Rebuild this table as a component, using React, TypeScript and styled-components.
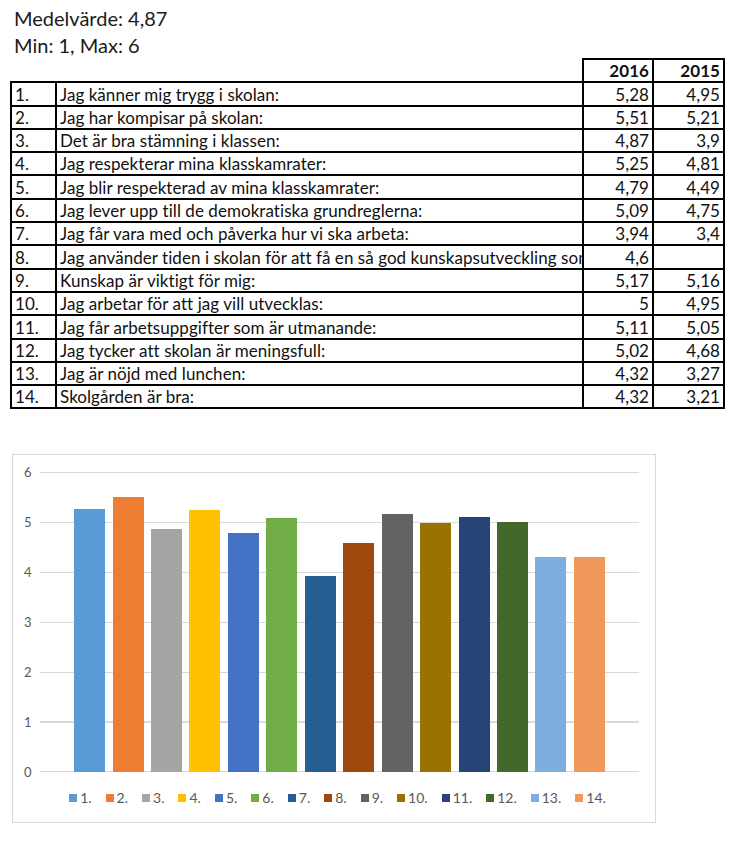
import React from "react";
import styled, { createGlobalStyle } from "styled-components";

const GlobalStyle = createGlobalStyle`
  html, body { margin: 0; padding: 0; background: #fff; }
  body { font-family: Lato, "Liberation Sans", sans-serif; color: #111; }
`;

const rows: { label: string; v16: string; v15: string }[] = [
  { label: "Jag känner mig trygg i skolan:", v16: "5,28", v15: "4,95" },
  { label: "Jag har kompisar på skolan:", v16: "5,51", v15: "5,21" },
  { label: "Det är bra stämning i klassen:", v16: "4,87", v15: "3,9" },
  { label: "Jag respekterar mina klasskamrater:", v16: "5,25", v15: "4,81" },
  { label: "Jag blir respekterad av mina klasskamrater:", v16: "4,79", v15: "4,49" },
  { label: "Jag lever upp till de demokratiska grundreglerna:", v16: "5,09", v15: "4,75" },
  { label: "Jag får vara med och påverka hur vi ska arbeta:", v16: "3,94", v15: "3,4" },
  { label: "Jag använder tiden i skolan för att få en så god kunskapsutveckling som möjligt:", v16: "4,6", v15: "" },
  { label: "Kunskap är viktigt för mig:", v16: "5,17", v15: "5,16" },
  { label: "Jag arbetar för att jag vill utvecklas:", v16: "5", v15: "4,95" },
  { label: "Jag får arbetsuppgifter som är utmanande:", v16: "5,11", v15: "5,05" },
  { label: "Jag tycker att skolan är meningsfull:", v16: "5,02", v15: "4,68" },
  { label: "Jag är nöjd med lunchen:", v16: "4,32", v15: "3,27" },
  { label: "Skolgården är bra:", v16: "4,32", v15: "3,21" },
];

const series: { value: number; color: string }[] = [
  { value: 5.28, color: "#5B9BD5" },
  { value: 5.51, color: "#ED7D31" },
  { value: 4.87, color: "#A5A5A5" },
  { value: 5.25, color: "#FFC000" },
  { value: 4.79, color: "#4472C4" },
  { value: 5.09, color: "#70AD47" },
  { value: 3.94, color: "#255E91" },
  { value: 4.6, color: "#9E480E" },
  { value: 5.17, color: "#636363" },
  { value: 5.0, color: "#997300" },
  { value: 5.11, color: "#264478" },
  { value: 5.02, color: "#43682B" },
  { value: 4.32, color: "#7CAFDD" },
  { value: 4.32, color: "#F1975A" },
];

const UNIT = 49.9;

const Page = styled.div`
  width: 738px;
  height: 847px;
  overflow: hidden;
`;

const Summary = styled.div`
  padding: 5px 0 0 14px;
  height: 58px;
  box-sizing: border-box;
  font-size: 20px;
  line-height: 27px;
  color: #1a1a1a;
`;

const Table = styled.table`
  margin-left: 10px;
  width: 713px;
  border-collapse: collapse;
  table-layout: fixed;
  font-size: 17px;
  letter-spacing: 0.05px;
`;

const Col = styled.col<{ $w: number }>`
  width: ${(p) => p.$w}px;
`;

const Cell = styled.td<{ $num?: boolean; $blank?: boolean }>`
  height: 21.3px;
  padding: 0 3px 0 3px;
  border: 2px solid #000;
  ${(p) => (p.$blank ? "border-top: none; border-left: none; border-right: none;" : "")}
  text-align: ${(p) => (p.$num ? "right" : "left")};
  white-space: nowrap;
  overflow: hidden;
  text-overflow: clip;
  line-height: 20px;
  vertical-align: bottom;
`;

const HeadCell = styled(Cell)`
  font-weight: 700;
`;

const ChartBox = styled.div`
  margin: 45px 0 0 12px;
  width: 644px;
  height: 369px;
  box-sizing: border-box;
  border: 1px solid #d9d9d9;
  padding-top: 16.5px;
`;

const PlotRow = styled.div`
  display: grid;
  grid-template-columns: 27px 599px;
`;

const Axis = styled.div`
  display: flex;
  flex-direction: column;
  justify-content: space-between;
  margin: -8px 0;
  font-size: 13px;
  line-height: 16px;
  color: #595959;
  padding-left: 11px;
`;

const Plot = styled.div`
  height: ${6 * UNIT + 1}px;
  background: repeating-linear-gradient(
    to bottom,
    #d9d9d9 0,
    #d9d9d9 1px,
    transparent 1px,
    transparent ${UNIT}px
  );
  display: flex;
  align-items: flex-end;
  justify-content: center;
  gap: 7.46px;
`;

const Bar = styled.div<{ $color: string }>`
  width: 31px;
  background: ${(p) => p.$color};
`;

const Legend = styled.div`
  margin-left: 25px;
  width: 599px;
  margin-top: 18px;
  display: flex;
  justify-content: center;
  gap: 14px;
  font-size: 14px;
  line-height: 16px;
  color: #595959;
`;

const LegendItem = styled.div`
  display: flex;
  align-items: center;
  gap: 3px;
`;

const Swatch = styled.span<{ $color: string }>`
  width: 8px;
  height: 8px;
  background: ${(p) => p.$color};
`;

export default function App() {
  return (
    <Page>
      <GlobalStyle />
      <Summary>
        <div>Medelvärde: 4,87</div>
        <div>Min: 1, Max: 6</div>
      </Summary>
      <Table>
        <colgroup>
          <Col $w={45} />
          <Col $w={527} />
          <Col $w={70} />
          <Col $w={71} />
        </colgroup>
        <thead>
          <tr>
            <Cell $blank />
            <Cell $blank />
            <HeadCell $num as="th">2016</HeadCell>
            <HeadCell $num as="th">2015</HeadCell>
          </tr>
        </thead>
        <tbody>
          {rows.map((r, i) => (
            <tr key={i}>
              <Cell>{i + 1}.</Cell>
              <Cell>{r.label}</Cell>
              <Cell $num>{r.v16}</Cell>
              <Cell $num>{r.v15}</Cell>
            </tr>
          ))}
        </tbody>
      </Table>
      <ChartBox>
        <PlotRow>
          <Axis>
            {[6, 5, 4, 3, 2, 1, 0].map((n) => (
              <span key={n}>{n}</span>
            ))}
          </Axis>
          <Plot>
            {series.map((s, i) => (
              <Bar key={i} $color={s.color} style={{ height: `${s.value * UNIT}px` }} />
            ))}
          </Plot>
        </PlotRow>
        <Legend>
          {series.map((s, i) => (
            <LegendItem key={i}>
              <Swatch $color={s.color} />
              <span>{i + 1}.</span>
            </LegendItem>
          ))}
        </Legend>
      </ChartBox>
    </Page>
  );
}
